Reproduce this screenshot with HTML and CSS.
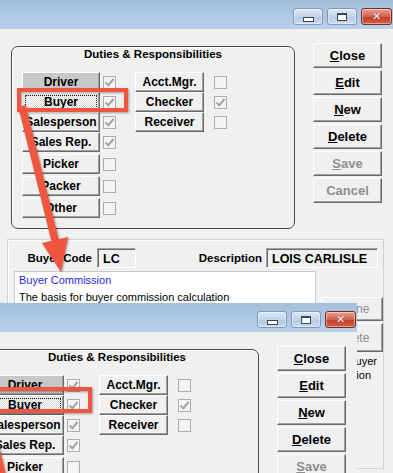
FILE: index.html
```html
<!DOCTYPE html>
<html>
  <head>
    <meta charset="utf-8">
    <title>Buyers</title>
    <link rel="stylesheet" href="styles.css">
  </head>
  <body>
    <div class="shot">
      <div class="win">
        <div class="titlebar">
          <span class="cap"><i class="ico-min"></i></span>
          <span class="cap"><i class="ico-max"></i></span>
          <span class="cap cap-close">&#x2715;</span>
        </div>
        <div class="top">
          <div class="duties">
            <div class="duties-title">Duties &amp; Responsibilities</div>
            <div class="duties-grid">
              <div class="col">
                <div class="row"><span class="btn pressed">Driver</span><span class="chk on"></span></div>
                <div class="row"><span class="btn focus">Buyer</span><span class="chk on"></span></div>
                <div class="row"><span class="btn">Salesperson</span><span class="chk on"></span></div>
                <div class="row"><span class="btn">Sales Rep.</span><span class="chk on"></span></div>
                <div class="row sep"><span class="btn">Picker</span><span class="chk"></span></div>
                <div class="row sep"><span class="btn">Packer</span><span class="chk"></span></div>
                <div class="row sep"><span class="btn">Other</span><span class="chk"></span></div>
              </div>
              <div class="col col2">
                <div class="row"><span class="btn">Acct.Mgr.</span><span class="chk"></span></div>
                <div class="row"><span class="btn">Checker</span><span class="chk on"></span></div>
                <div class="row"><span class="btn">Receiver</span><span class="chk"></span></div>
              </div>
            </div>
          </div>
          <div class="actions">
            <span class="btn big"><u>C</u>lose</span>
            <span class="btn big"><u>E</u>dit</span>
            <span class="btn big"><u>N</u>ew</span>
            <span class="btn big"><u>D</u>elete</span>
            <span class="btn big off"><u>S</u>ave</span>
            <span class="btn big off">Cancel</span>
          </div>
        </div>
        <div class="panel">
          <div class="fields">
            <span class="lbl lbl-code">Buyer Code</span>
            <span class="field field-code">LC</span>
            <span class="lbl lbl-desc">Description</span>
            <span class="field field-desc">LOIS CARLISLE</span>
          </div>
          <div class="lower">
            <div class="memo">
              <div class="memo-title">Buyer Commission</div>
              <p>The basis for buyer commission calculation</p>
            </div>
            <div class="side">
              <span class="btn small">Define</span>
              <span class="btn small tall">Delete</span>
              <span class="side-text">Buyer</span>
              <span class="side-text short">Commission</span>
            </div>
          </div>
        </div>
        <svg class="marks" width="393" height="473" viewBox="0 0 393 473">
          <rect x="19" y="90" width="107" height="20" fill="none" stroke="#f0553f" stroke-width="4"/>
          <line x1="22" y1="106" x2="56" y2="244" stroke="#f0553f" stroke-width="7.5"/>
          <polygon points="61,272 42,243 68,237" fill="#f0553f"/>
        </svg>
      </div>

      <div class="win copy">
        <div class="titlebar">
          <span class="cap"><i class="ico-min"></i></span>
          <span class="cap"><i class="ico-max"></i></span>
          <span class="cap cap-close">&#x2715;</span>
        </div>
        <div class="top">
          <div class="duties">
            <div class="duties-title">Duties &amp; Responsibilities</div>
            <div class="duties-grid">
              <div class="col">
                <div class="row"><span class="btn pressed">Driver</span><span class="chk on"></span></div>
                <div class="row"><span class="btn focus">Buyer</span><span class="chk on"></span></div>
                <div class="row"><span class="btn">Salesperson</span><span class="chk on"></span></div>
                <div class="row"><span class="btn">Sales Rep.</span><span class="chk on"></span></div>
                <div class="row sep"><span class="btn">Picker</span><span class="chk"></span></div>
                <div class="row sep"><span class="btn">Packer</span><span class="chk"></span></div>
                <div class="row sep"><span class="btn">Other</span><span class="chk"></span></div>
              </div>
              <div class="col col2">
                <div class="row"><span class="btn">Acct.Mgr.</span><span class="chk"></span></div>
                <div class="row"><span class="btn">Checker</span><span class="chk on"></span></div>
                <div class="row"><span class="btn">Receiver</span><span class="chk"></span></div>
              </div>
            </div>
          </div>
          <div class="actions">
            <span class="btn big"><u>C</u>lose</span>
            <span class="btn big"><u>E</u>dit</span>
            <span class="btn big"><u>N</u>ew</span>
            <span class="btn big"><u>D</u>elete</span>
            <span class="btn big off"><u>S</u>ave</span>
            <span class="btn big off">Cancel</span>
          </div>
        </div>
        <svg class="marks" width="393" height="473" viewBox="0 0 393 473">
          <rect x="19" y="86" width="107" height="22" fill="none" stroke="#f0553f" stroke-width="4"/>
          <line x1="22" y1="106" x2="56" y2="244" stroke="#f0553f" stroke-width="7.5"/>
          <polygon points="61,272 42,243 68,237" fill="#f0553f"/>
        </svg>
      </div>
    </div>
  </body>
</html>
```

FILE: styles.css
```css
body {
  margin: 0;
  background: #f0f0f0;
  font-family: "Liberation Sans", Arial, sans-serif;
  color: #000;
}

.shot {
  width: 393px;
  height: 473px;
  position: relative;
  overflow: hidden;
}

.win {
  width: 393px;
  height: 473px;
  position: relative;
  background: #f0f0f0;
}

/* second screenshot pasted over the first */
.copy {
  position: absolute;
  left: -36px;
  top: 303px;
}

/* title bar */
.titlebar {
  height: 29px;
  box-sizing: border-box;
  padding: 8px 1px 0 0;
  display: flex;
  justify-content: flex-end;
  align-items: flex-start;
  gap: 4px;
  background: linear-gradient(#a4bedc, #b9d0e9);
}

.cap {
  width: 30px;
  height: 17px;
  box-sizing: border-box;
  border: 1px solid #7f98b8;
  border-radius: 3px;
  background: linear-gradient(#dde8f5, #c2d4ea 50%, #b3c9e4 51%, #c8d9ee);
  box-shadow: inset 0 0 0 1px rgba(255, 255, 255, .45);
  display: flex;
  align-items: center;
  justify-content: center;
}

.cap-close {
  width: 31px;
  border-color: #7b2a20;
  background: linear-gradient(#e8a293, #d1604d 50%, #c2412e 51%, #cf5a45);
  color: #fff;
  font: bold 11px "DejaVu Sans", sans-serif;
  text-shadow: 0 0 1px #5a1a10;
}

.ico-min {
  width: 9px;
  height: 3px;
  border: 1px solid #35455c;
  background: #fff;
  margin-top: 5px;
}

.ico-max {
  width: 8px;
  height: 5px;
  border: 1px solid #35455c;
  border-top-width: 2px;
  background: #fff;
}

/* top area */
.top {
  display: flex;
  align-items: flex-start;
  padding: 14px 0 0 11px;
}

.duties {
  width: 284px;
  height: 183px;
  margin-top: 3px;
  box-sizing: border-box;
  border: 1px solid #4a4a4a;
  border-radius: 7px;
  box-shadow: inset 1px 1px #fff;
}

.duties-title {
  height: 14px;
  line-height: 14px;
  text-align: center;
  font-weight: bold;
  font-size: 11.5px;
}

.duties-grid {
  display: flex;
  gap: 19px;
  margin: 11px 0 0 10px;
}

.col {
  display: flex;
  flex-direction: column;
}

.row {
  display: flex;
  align-items: center;
  height: 20px;
}

.row.sep {
  margin-top: 2px;
}

.btn {
  display: flex;
  align-items: center;
  justify-content: center;
  box-sizing: border-box;
  background: #f0f0f0;
  border: 1px solid;
  border-color: #fff #696969 #696969 #fff;
  box-shadow: inset -1px -1px #a0a0a0;
  font-weight: bold;
  font-size: 12px;
  white-space: nowrap;
}

.col .btn {
  width: 78px;
  height: 20px;
}

.col2 .btn {
  width: 69px;
}

.btn.pressed {
  background: #c8c8c8;
}

.btn.focus {
  background: repeating-conic-gradient(#fff 0 25%, #d6d6d6 0 50%) 0 0 / 2px 2px;
  outline: 1px dotted #222;
  outline-offset: -4px;
}

.chk {
  width: 13px;
  height: 13px;
  margin-left: 3px;
  box-sizing: border-box;
  border: 1px solid #adadad;
  background: #f4f4f4;
  position: relative;
}

.col2 .chk {
  margin-left: 10px;
}

.chk.on::after {
  content: "";
  position: absolute;
  left: 3px;
  top: 0;
  width: 3px;
  height: 7px;
  border: solid #a3a3a3;
  border-width: 0 2px 2px 0;
  transform: rotate(40deg);
}

.actions {
  display: flex;
  flex-direction: column;
  gap: 2px;
  margin-left: 18px;
}

.btn.big {
  width: 69px;
  height: 25px;
  font-size: 13px;
}

.btn.off {
  color: #8d8d8d;
}

/* lower panel */
.panel {
  width: 377px;
  height: 230px;
  margin: 10px 0 0 7px;
  box-sizing: border-box;
  border: 1px solid #d0d0d0;
  box-shadow: inset 1px 1px #fff;
}

.fields {
  display: flex;
  align-items: center;
  height: 20px;
  margin-top: 8px;
}

.lbl {
  box-sizing: border-box;
  text-align: right;
  font-weight: bold;
  font-size: 11.5px;
}

.lbl-code {
  width: 89px;
  padding-right: 5px;
}

.lbl-desc {
  width: 130px;
  padding-right: 4px;
}

.field {
  height: 20px;
  box-sizing: border-box;
  border: 1px solid;
  border-color: #a0a0a0 #fff #fff #a0a0a0;
  box-shadow: inset 1px 1px #696969;
  padding: 3px 0 0 5px;
  font-weight: bold;
  font-size: 12.5px;
}

.field-code {
  width: 39px;
}

.field-desc {
  width: 112px;
}

.lower {
  display: flex;
  margin: 3px 0 0 6px;
}

.memo {
  width: 302px;
  height: 190px;
  box-sizing: border-box;
  background: #fff;
  border: 1px solid #c8c8c8;
  padding: 2px 4px;
  font-size: 11px;
}

.memo-title {
  color: #1f1fe6;
}

.memo p {
  margin: 5px 0 0;
}

.side {
  width: 62px;
  display: flex;
  flex-direction: column;
  gap: 2px;
  margin: 26px 0 0 5px;
  font-size: 11px;
}

.btn.small {
  width: 62px;
  height: 24px;
  font-weight: normal;
  font-size: 12px;
  color: #8d8d8d;
}

.btn.small.tall {
  height: 29px;
}

.side-text {
  align-self: flex-end;
  margin-right: 6px;
  line-height: 14px;
  white-space: nowrap;
}

.side-text:first-of-type {
  margin-top: 2px;
}

.side-text.short {
  margin-top: -2px;
  margin-right: 12px;
}

.marks {
  position: absolute;
  left: 0;
  top: 0;
  pointer-events: none;
  filter: drop-shadow(1px 1px 1px rgba(0, 0, 0, .35));
}
```
